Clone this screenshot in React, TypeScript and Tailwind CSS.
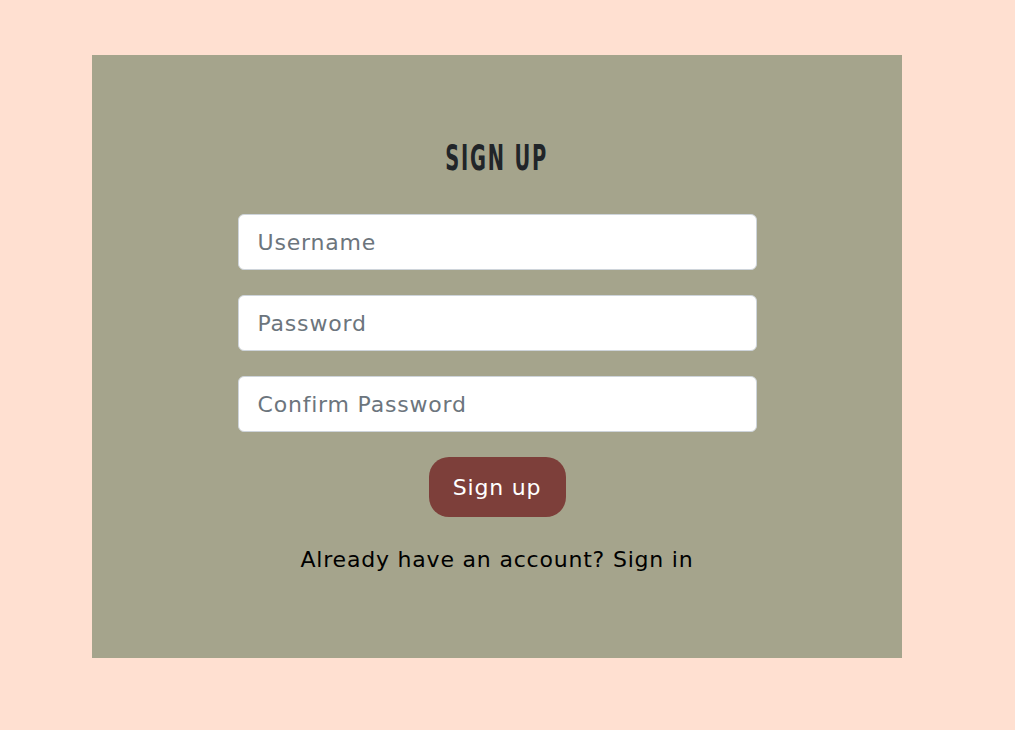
export default function App() {
  const fields = ["Username", "Password", "Confirm Password"];
  return (
    <div className="min-h-[730px] w-full bg-[#FFE0D1] pt-[55px] pl-[92px]" style={{ fontFamily: '"DejaVu Sans", "Liberation Sans", sans-serif' }}>
      <div className="flex h-[603px] w-[810px] flex-col items-center bg-[#A5A48C] pt-[85px]">
        <h1
          className="origin-center scale-x-[0.6] text-[36px] leading-none font-bold tracking-[3px] text-[#212529]"
          style={{ fontFamily: '"DejaVu Sans Condensed", "DejaVu Sans", sans-serif' }}
        >
          SIGN UP
        </h1>
        <form className="mt-[38px] flex w-[519px] flex-col gap-[25px]">
          {fields.map((f) => (
            <input
              key={f}
              type={f.includes("Password") ? "password" : "text"}
              placeholder={f}
              className="h-[56px] w-full rounded-md border border-[#ced4da] bg-white px-[19px] text-[22px] tracking-[0.8px] text-[#212529] placeholder:text-[#6c757d] outline-none"
            />
          ))}
        </form>
        <button className="mt-[25px] h-[60px] w-[137px] rounded-[20px] bg-[#7D3F3A] text-[22px] tracking-[0.8px] text-white">
          Sign up
        </button>
        <p className="mt-[26px] text-[22px] tracking-[0.8px] text-black">
          Already have an account? Sign in
        </p>
      </div>
    </div>
  );
}
